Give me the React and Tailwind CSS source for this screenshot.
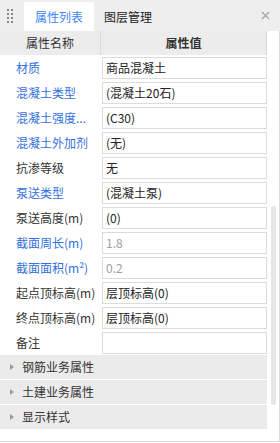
import React from "react";

const rows = [
  { label: "材质", value: "商品混凝土", blue: true },
  { label: "混凝土类型", value: "(混凝土20石)", blue: true },
  { label: "混凝土强度...", value: "(C30)", blue: true },
  { label: "混凝土外加剂", value: "(无)", blue: true },
  { label: "抗渗等级", value: "无" },
  { label: "泵送类型", value: "(混凝土泵)", blue: true },
  { label: "泵送高度(m)", value: "(0)" },
  { label: "截面周长(m)", value: "1.8", blue: true, muted: true },
  { label: "截面面积(m²)", value: "0.2", blue: true, muted: true },
  { label: "起点顶标高(m)", value: "层顶标高(0)" },
  { label: "终点顶标高(m)", value: "层顶标高(0)" },
  { label: "备注", value: "" },
];

const sections = ["钢筋业务属性", "土建业务属性", "显示样式"];

const Grip = () => (
  <div className="grid grid-cols-2 gap-x-[2px] gap-y-[2px] w-[6px]">
    {Array.from({ length: 8 }).map((_, i) => (
      <span key={i} className="block w-[2px] h-[2px] bg-[#8a8a8a]" />
    ))}
  </div>
);

export default function App() {
  return (
    <div
      className="w-[280px] h-[443px] bg-white text-[12px] text-[#333]"
      style={{ fontFamily: '"Noto Sans CJK SC", "Noto Sans", sans-serif' }}
    >
      {/* tab bar */}
      <div className="h-[31px] bg-[#eeeeee] flex items-end pl-[7px] pr-[10px]">
        <div className="self-center mr-[11px]">
          <Grip />
        </div>
        <div className="h-[29px] bg-white px-[11px] flex items-center text-[#3d87f5] leading-[16px]">
          属性列表
        </div>
        <div className="h-[29px] px-[10px] flex items-center text-[#222] leading-[16px]">
          图层管理
        </div>
        <div className="ml-auto h-[31px] flex items-center">
          <svg width="9" height="9" viewBox="0 0 9 9">
            <path d="M1 1 L8 8 M8 1 L1 8" stroke="#a0a0a0" strokeWidth="1.1" />
          </svg>
        </div>
      </div>

      <div className="flex h-[411px] border-r border-b border-[#dcdcdc]">
        {/* content */}
        <div className="w-[267px] flex flex-col">
          <div className="h-[24px] flex bg-[#ececec] leading-[16px]">
            <div className="w-[101px] border-r border-[#dadada] flex items-center justify-center text-[#333]">
              属性名称
            </div>
            <div className="flex-1 border-r border-[#dadada] flex items-center justify-center font-bold text-[#333]">
              属性值
            </div>
          </div>

          {rows.map((r) => (
            <div key={r.label} className="h-[25px] flex items-center">
              <div
                className={`w-[101px] pl-4 pr-[2px] truncate leading-[17px] ${
                  r.blue ? "text-[#3370e0]" : "text-[#333]"
                }`}
              >
                {r.label}
              </div>
              <div
                className={`flex-1 h-[22px] ml-[1px] border border-[#dcdcdc] px-[3px] flex items-center leading-[17px] ${
                  r.muted ? "text-[#a0a0a0]" : "text-[#222]"
                }`}
              >
                {r.value}
              </div>
            </div>
          ))}

          {sections.map((s) => (
            <div
              key={s}
              className="h-[25px] bg-[#ebebeb] border-b border-white flex items-center leading-[16px] text-[#333]"
            >
              <span className="ml-[10px] mr-[8px] w-0 h-0 border-y-[3px] border-y-transparent border-l-[4px] border-l-[#9a9a9a]" />
              {s}
            </div>
          ))}
        </div>

        {/* scrollbar */}
        <div className="flex-1 pl-[4px]">
          <div className="mt-[175px] w-[5px] h-[199px] bg-[#e6e6e6] rounded-[2px]" />
        </div>
      </div>
    </div>
  );
}
